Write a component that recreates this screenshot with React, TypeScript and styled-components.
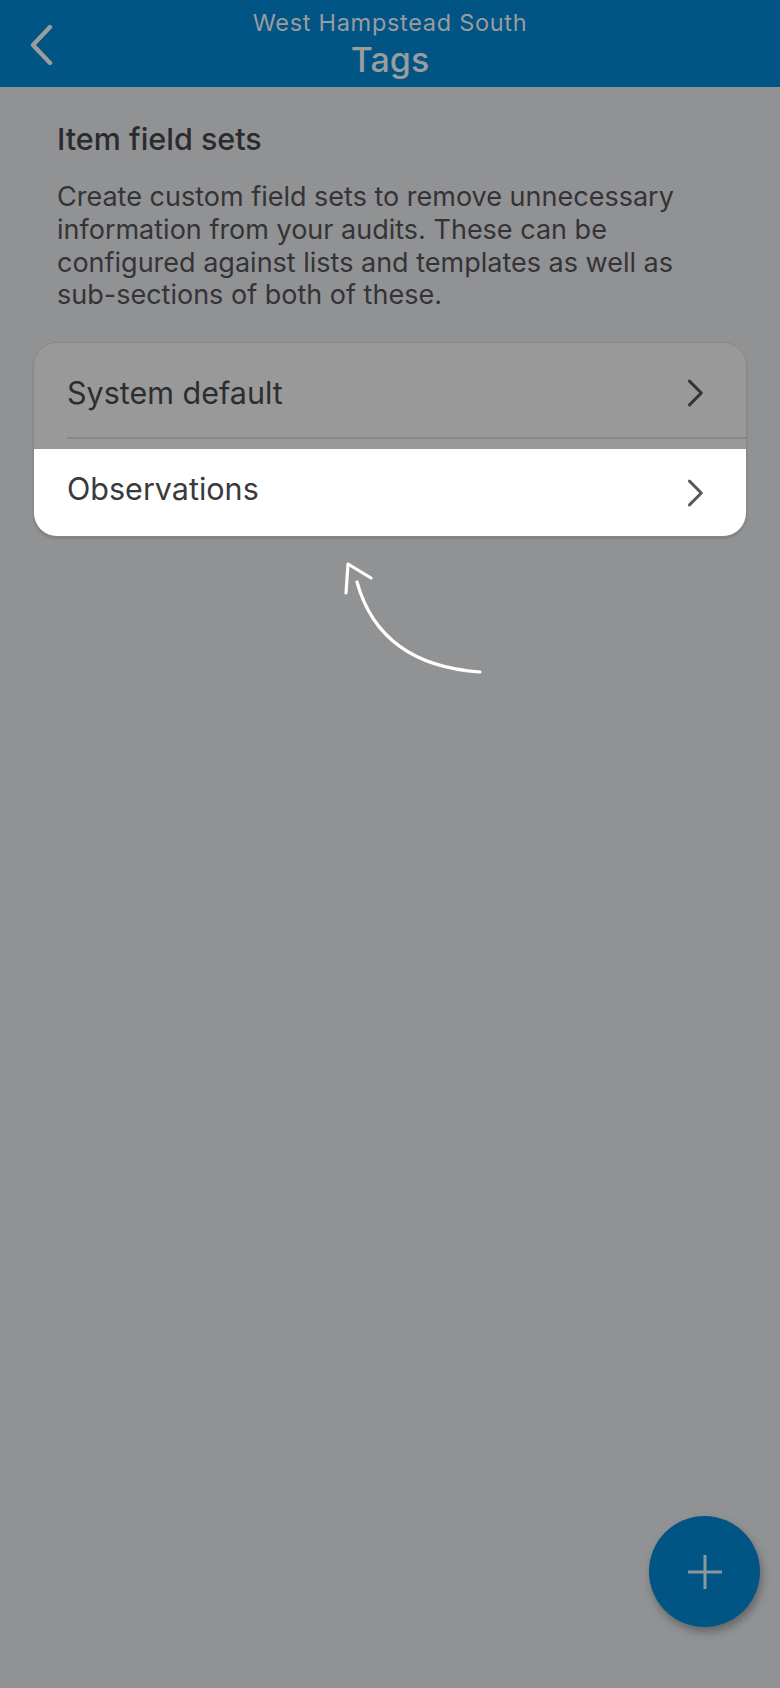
import React from "react";
import styled, { createGlobalStyle } from "styled-components";

const COLORS = {
  page: "#919294",
  header: "#005585",
  headerText: "#9b9c9e",
  text: "#2b2b2d",
  dimRow: "#999999",
  border: "#868687",
  white: "#ffffff",
};

const GlobalStyle = createGlobalStyle`
  html, body {
    margin: 0;
    padding: 0;
    background: ${COLORS.page};
  }
  body {
    font-family: Inter, "Noto Sans", sans-serif;
    -webkit-font-smoothing: antialiased;
  }
`;

const rows = [
  { label: "System default", highlighted: false },
  { label: "Observations", highlighted: true },
];

function Chevron({ color, size = 28 }: { color: string; size?: number }) {
  return (
    <svg width={size * 0.6} height={size} viewBox="0 0 17 28" fill="none">
      <path
        d="M2.5 2 L14.5 14 L2.5 26"
        stroke={color}
        strokeWidth="3"
        strokeLinecap="round"
        strokeLinejoin="round"
      />
    </svg>
  );
}

export default function App() {
  return (
    <>
      <GlobalStyle />
      <Screen>
        <Header>
          <BackButton aria-label="back">
            <svg width="26" height="42" viewBox="0 0 26 42" fill="none">
              <path
                d="M22 3 L5 21 L22 39"
                stroke={COLORS.headerText}
                strokeWidth="4.4"
                strokeLinecap="round"
                strokeLinejoin="round"
              />
            </svg>
          </BackButton>
          <Subtitle>West Hampstead South</Subtitle>
          <Title>Tags</Title>
        </Header>

        <Content>
          <SectionTitle>Item field sets</SectionTitle>
          <Description>
            Create custom field sets to remove unnecessary
            <br />
            information from your audits. These can be
            <br />
            configured against lists and templates as well as
            <br />
            sub-sections of both of these.
          </Description>

          <Card>
            {rows.map((row, i) => (
              <Row key={row.label} $highlighted={row.highlighted} $first={i === 0}>
                <RowLabel $highlighted={row.highlighted}>{row.label}</RowLabel>
                <Chevron color={row.highlighted ? "#59595b" : "#333335"} />
              </Row>
            ))}
          </Card>

          {/* tutorial hint pointing at the highlighted row */}
          <Pointer>
            <svg width="170" height="140" viewBox="0 0 170 140" fill="none">
              <path
                d="M37 42 Q60 125 160 132"
                stroke="#fff"
                strokeWidth="3.2"
                strokeLinecap="round"
                fill="none"
              />
              <path
                d="M26 53 L28 24 L51 38"
                stroke="#fff"
                strokeWidth="3.2"
                strokeLinecap="round"
                strokeLinejoin="round"
                fill="none"
              />
            </svg>
          </Pointer>
        </Content>

        <Fab aria-label="add">
          <svg width="36" height="36" viewBox="0 0 36 36">
            <path d="M18 1 V35 M1 18 H35" stroke="#8e979e" strokeWidth="3" />
          </svg>
        </Fab>
      </Screen>
    </>
  );
}

const Screen = styled.div`
  position: relative;
  min-height: 1688px;
  background: ${COLORS.page};
  display: flex;
  flex-direction: column;
`;

const Header = styled.header`
  position: relative;
  height: 87px;
  box-sizing: border-box;
  padding-top: 9px;
  background: ${COLORS.header};
  display: flex;
  flex-direction: column;
  align-items: center;
  color: ${COLORS.headerText};
`;

const BackButton = styled.div`
  position: absolute;
  left: 28px;
  top: 24px;
  display: flex;
`;

const Subtitle = styled.div`
  font-size: 23.5px;
  line-height: 28px;
  letter-spacing: 0.7px;
`;

const Title = styled.div`
  margin-top: 3px;
  font-size: 34px;
  line-height: 40px;
  font-weight: 500;
`;

const Content = styled.main`
  padding: 33px 33px 0 33px;
  display: flex;
  flex-direction: column;
`;

const SectionTitle = styled.h2`
  margin: 0 0 0 24px;
  font-size: 30.5px;
  line-height: 38px;
  font-weight: 500;
  color: ${COLORS.text};
`;

const Description = styled.p`
  margin: 23px 0 0 24px;
  font-size: 27px;
  line-height: 32.8px;
  color: #343436;
  white-space: nowrap;
`;

const Card = styled.div`
  margin-top: 30px;
  border: 1.5px solid ${COLORS.border};
  border-radius: 24px;
  overflow: hidden;
  background: ${COLORS.dimRow};
  box-shadow: 0 2px 2px rgba(0, 0, 0, 0.12);
`;

const Row = styled.div<{ $highlighted: boolean; $first: boolean }>`
  position: relative;
  display: flex;
  align-items: center;
  justify-content: space-between;
  box-sizing: border-box;
  height: ${(p) => (p.$first ? "94px" : "99px")};
  padding: ${(p) => (p.$first ? "5px 42px 0 33px" : "0 42px 0 33px")};
  background: ${(p) => (p.$highlighted ? COLORS.white : COLORS.dimRow)};
  border-top: ${(p) => (p.$first ? "none" : `12px solid ${COLORS.dimRow}`)};

  &::before {
    content: "";
    display: ${(p) => (p.$first ? "none" : "block")};
    position: absolute;
    left: 33px;
    right: 0;
    top: -12px;
    height: 2px;
    background: ${COLORS.border};
  }
`;

const RowLabel = styled.span<{ $highlighted: boolean }>`
  font-size: 30.5px;
  color: ${(p) => (p.$highlighted ? "#3a3a3c" : "#2d2d2f")};
  margin-top: ${(p) => (p.$highlighted ? "-8px" : "0")};
`;

const Pointer = styled.div`
  display: flex;
  margin: 3px 0 0 287px;
`;

const Fab = styled.div`
  position: absolute;
  right: 20px;
  top: 1516px;
  width: 111px;
  height: 111px;
  border-radius: 50%;
  background: ${COLORS.header};
  display: flex;
  align-items: center;
  justify-content: center;
  box-shadow: 2px 5px 8px rgba(0, 0, 0, 0.3);
`;
